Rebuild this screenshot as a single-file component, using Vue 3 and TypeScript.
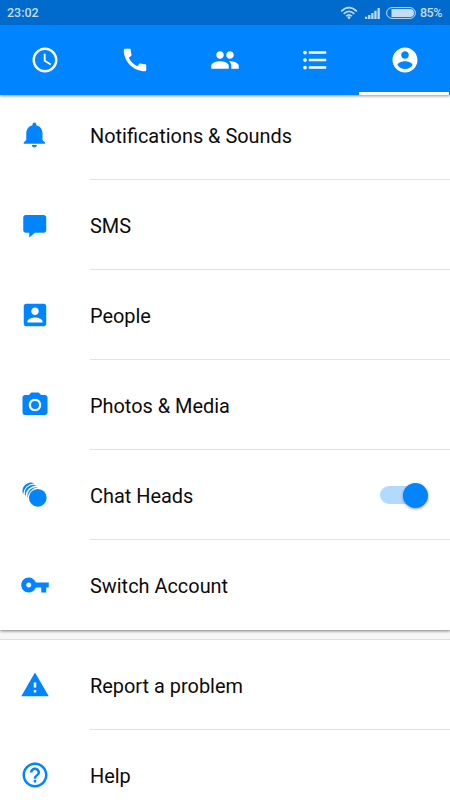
<script setup lang="ts">
import { ref } from 'vue'

interface Tab {
  id: string
  path: string
}

interface Row {
  label: string
  icon: string
  path?: string
  toggle?: boolean
}

const tabs: Tab[] = [
  {
    id: 'recent',
    path: 'M11.99 2C6.47 2 2 6.48 2 12s4.47 10 9.99 10C17.52 22 22 17.52 22 12S17.52 2 11.99 2zM12 20c-4.42 0-8-3.58-8-8s3.58-8 8-8 8 3.58 8 8-3.58 8-8 8zM12.5 7H11v6l5.25 3.15.75-1.23-4.5-2.67z',
  },
  {
    id: 'calls',
    path: 'M20.01 15.38c-1.23 0-2.42-.2-3.53-.56-.35-.12-.74-.03-1.01.24l-1.57 1.97c-2.83-1.35-5.48-3.9-6.89-6.83l1.95-1.66c.27-.28.35-.67.24-1.02-.37-1.11-.56-2.3-.56-3.53 0-.54-.45-.99-.99-.99H4.19C3.65 3 3 3.24 3 3.99 3 13.28 10.73 21 20.01 21c.71 0 .99-.63.99-1.18v-3.45c0-.54-.45-.99-.99-.99z',
  },
  {
    id: 'groups',
    path: 'M16 11c1.66 0 2.99-1.34 2.99-3S17.66 5 16 5s-3 1.34-3 3 1.34 3 3 3zm-8 0c1.66 0 2.99-1.34 2.99-3S9.66 5 8 5 5 6.34 5 8s1.34 3 3 3zm0 2c-2.33 0-7 1.17-7 3.5V19h14v-2.5c0-2.33-4.67-3.5-7-3.5zm8 0c-.29 0-.62.02-.97.05 1.16.84 1.97 1.97 1.97 3.45V19h6v-2.5c0-2.33-4.67-3.5-7-3.5z',
  },
  {
    id: 'contacts',
    path: 'M4 10.5c-.83 0-1.5.67-1.5 1.5s.67 1.5 1.5 1.5 1.5-.67 1.5-1.5-.67-1.5-1.5-1.5zm0-6c-.83 0-1.5.67-1.5 1.5S3.17 7.5 4 7.5 5.5 6.83 5.5 6 4.83 4.5 4 4.5zm0 12c-.83 0-1.5.67-1.5 1.5s.67 1.5 1.5 1.5 1.5-.67 1.5-1.5-.67-1.5-1.5-1.5zM7 19h14v-2H7v2zm0-6h14v-2H7v2zm0-8v2h14V5H7z',
  },
  {
    id: 'profile',
    path: 'M12 2C6.48 2 2 6.48 2 12s4.48 10 10 10 10-4.48 10-10S17.52 2 12 2zm0 3c1.66 0 3 1.34 3 3s-1.34 3-3 3-3-1.34-3-3 1.34-3 3-3zm0 14.2c-2.5 0-4.71-1.28-6-3.22.03-1.99 4-3.08 6-3.08 1.99 0 5.97 1.09 6 3.08-1.29 1.94-3.5 3.22-6 3.22z',
  },
]

const settings: Row[] = [
  {
    label: 'Notifications & Sounds',
    icon: 'bell',
    path: 'M11.5 22c1.1 0 2-.9 2-2h-4c0 1.1.9 2 2 2zm6.5-6v-5.5c0-3.07-2.13-5.64-5-6.32V3.5c0-.83-.67-1.5-1.5-1.5S10 2.67 10 3.5v.68c-2.87.68-5 3.25-5 6.32V16l-2 2v1h17v-1l-2-2z',
  },
  {
    label: 'SMS',
    icon: 'message',
    path: 'M4.6 4h14.4c1.1 0 2 .9 2 2v10.2c0 1.1-.9 2-2 2h-7.1L7.4 22v-3.8H4.6c-1.1 0-2-.9-2-2V6c0-1.1.9-2 2-2z',
  },
  {
    label: 'People',
    icon: 'people',
    path: 'M3 5v14c0 1.1.89 2 2 2h14c1.1 0 2-.9 2-2V5c0-1.1-.9-2-2-2H5c-1.11 0-2 .9-2 2zm12 4c0 1.66-1.34 3-3 3s-3-1.34-3-3 1.34-3 3-3 3 1.34 3 3zm-9 8c0-2 4-3.1 6-3.1s6 1.1 6 3.1v1H6v-1z',
  },
  {
    label: 'Photos & Media',
    icon: 'camera',
    path: 'M15.2 12a3.2 3.2 0 1 1-6.4 0 3.2 3.2 0 0 1 6.4 0zM9 2L7.17 4H4c-1.1 0-2 .9-2 2v12c0 1.1.9 2 2 2h16c1.1 0 2-.9 2-2V6c0-1.1-.9-2-2-2h-3.17L15 2H9zm3 15c-2.76 0-5-2.24-5-5s2.24-5 5-5 5 2.24 5 5-2.24 5-5 5z',
  },
  { label: 'Chat Heads', icon: 'heads', toggle: true },
  {
    label: 'Switch Account',
    icon: 'key',
    path: 'M12.65 10C11.83 7.67 9.61 6 7 6c-3.31 0-6 2.69-6 6s2.69 6 6 6c2.61 0 4.83-1.67 5.65-4H17v4h4v-4h2v-4H12.65zM7 14c-1.1 0-2-.9-2-2s.9-2 2-2 2 .9 2 2-.9 2-2 2z',
  },
]

const support: Row[] = [
  {
    label: 'Report a problem',
    icon: 'warning',
    path: 'M1 21h22L12 2 1 21zm12-3h-2v-2h2v2zm0-4h-2v-4h2v4z',
  },
  {
    label: 'Help',
    icon: 'help',
    path: 'M11 18h2v-2h-2v2zm1-16C6.48 2 2 6.48 2 12s4.48 10 10 10 10-4.48 10-10S17.52 2 12 2zm0 18c-4.41 0-8-3.59-8-8s3.59-8 8-8 8 3.59 8 8-3.59 8-8 8zm0-14c-2.21 0-4 1.79-4 4h2c0-1.1.9-2 2-2s2 .9 2 2c0 2-3 1.75-3 5h2c0-2.25 3-2.5 3-5 0-2.21-1.79-4-4-4z',
  },
]

const groups: Row[][] = [settings, support]
const activeTab = ref('profile')
const chatHeads = ref(true)
</script>

<template>
  <div class="screen">
    <header class="header">
      <div class="status">
        <span class="time">23:02</span>
        <svg class="wifi" width="18" height="14" viewBox="0 0 18 14">
          <g fill="none" stroke="currentColor" stroke-width="1.7">
            <path d="M1.2 5.3Q9 -1.9 16.8 5.3" />
            <path d="M3.7 7.9Q9 3 14.3 7.9" />
            <path d="M6.1 10.2Q9 7.6 11.9 10.2" />
          </g>
          <circle cx="9" cy="11.6" r="1.4" fill="currentColor" />
        </svg>
        <svg class="signal" width="15" height="11" viewBox="0 0 15 11" fill="currentColor">
          <path d="M0 8.8h2.3V11H0zM3.1 7h2.3v4H3.1zM6.2 5h2.3v6H6.2zM9.3 2.8h2.3V11H9.3zM12.5 0h2.3v11h-2.3z" />
        </svg>
        <svg class="battery" width="30" height="12" viewBox="0 0 30 12">
          <rect x=".6" y=".6" width="28.8" height="10.8" rx="5.4" fill="none" stroke="currentColor" stroke-width="1" />
          <path d="M5.5 2H24a4 4 0 0 1 0 8H5.5z" fill="currentColor" />
        </svg>
        <span class="percent">85%</span>
      </div>
      <nav class="tabs">
        <button
          v-for="tab in tabs"
          :key="tab.id"
          class="tab"
          :class="{ active: tab.id === activeTab }"
          @click="activeTab = tab.id"
        >
          <svg class="icon" viewBox="0 0 24 24"><path :d="tab.path" /></svg>
        </button>
      </nav>
    </header>

    <main class="content">
      <section v-for="(rows, i) in groups" :key="i" class="card">
        <div v-for="row in rows" :key="row.label" class="row">
          <svg v-if="row.path" class="icon" viewBox="0 0 24 24"><path :d="row.path" /></svg>
          <svg v-else class="icon" viewBox="0 0 30 30">
            <path d="M3.2 14.2A8.4 8.4 0 0 1 14.2 3.2A11.6 11.6 0 0 0 3.2 14.2z" />
            <path d="M5.4 16.2A8.4 8.4 0 0 1 16.2 5.4A11.2 11.2 0 0 0 5.4 16.2z" />
            <path d="M7.6 18A8.6 8.6 0 0 1 18 7.6A10.8 10.8 0 0 0 7.6 18z" />
            <circle cx="17.8" cy="17.8" r="8.9" />
          </svg>
          <div class="body">
            <span class="label">{{ row.label }}</span>
            <button v-if="row.toggle" class="switch" :class="{ on: chatHeads }" @click="chatHeads = !chatHeads">
              <span class="knob"></span>
            </button>
          </div>
        </div>
      </section>
    </main>
  </div>
</template>

<style>
body {
  margin: 0;
  overflow: hidden;
}
</style>

<style scoped>
.screen {
  width: 450px;
  height: 800px;
  overflow: hidden;
  display: flex;
  flex-direction: column;
  background: #f7f7f7;
  font-family: Roboto, "Noto Sans", sans-serif;
  color: #0b0b0b;
}
button {
  border: 0;
  padding: 0;
  background: none;
}
.header {
  flex: none;
  position: relative;
  z-index: 1;
  background: #0084ff;
  box-shadow: 0 1px 3px rgba(0, 0, 0, 0.42);
}
.status {
  height: 25px;
  box-sizing: border-box;
  padding: 0 8px 0 7px;
  display: flex;
  align-items: center;
  background: #006acd;
  color: #c3ddf5;
  font-size: 12.5px;
  font-weight: 500;
}
.time {
  flex: 1;
}
.wifi {
  margin: 0 7px 0 0;
}
.signal {
  margin: 1px 6px 0 0;
}
.battery {
  margin: 0 4px 0 0;
}
.percent {
  width: 22px;
  font-size: 12.5px;
  letter-spacing: -0.5px;
  white-space: nowrap;
}
.tabs {
  display: flex;
  height: 70px;
}
.tab {
  flex: none;
  box-sizing: border-box;
  width: 90px;
  display: flex;
  align-items: center;
  justify-content: center;
}
.tab.active {
  margin: 0 1px 0 -1px;
  padding-left: 2px;
  box-shadow: inset 0 -3px #fff;
}
.icon {
  display: block;
  flex: none;
  width: 30px;
  height: 30px;
  fill: #fff;
}
.content {
  flex: 1;
  min-height: 0;
  margin-top: -5px;
}
.card {
  background: #fff;
  box-shadow: 0 1px 3px rgba(0, 0, 0, 0.5);
}
.card + .card {
  margin-top: 10px;
  box-shadow: 0 -1px #dedede;
}
.row {
  height: 90px;
  display: flex;
  align-items: center;
  padding-left: 20px;
  gap: 40px;
}
.row .icon {
  fill: #0084ff;
}
.body {
  flex: 1;
  align-self: stretch;
  display: flex;
  align-items: center;
  justify-content: space-between;
  padding-right: 22px;
  box-shadow: inset 0 -1px #e2e2e2;
}
.row:last-child .body {
  box-shadow: none;
}
.label {
  padding-top: 4px;
  font-size: 19.92px;
  line-height: 24px;
}
.switch {
  width: 48px;
  height: 18px;
  border-radius: 9px;
  display: flex;
  align-items: center;
  background: linear-gradient(#b9b9b9, #b9b9b9) left / 40px 18px no-repeat;
}
.switch.on {
  justify-content: flex-end;
  background-image: linear-gradient(#b2daff, #b2daff);
}
.knob {
  width: 25px;
  height: 25px;
  border-radius: 50%;
  background: #fff;
  box-shadow: 0 1px 3px rgba(0, 0, 0, 0.4);
}
.switch.on .knob {
  background: #0084ff;
}
</style>
